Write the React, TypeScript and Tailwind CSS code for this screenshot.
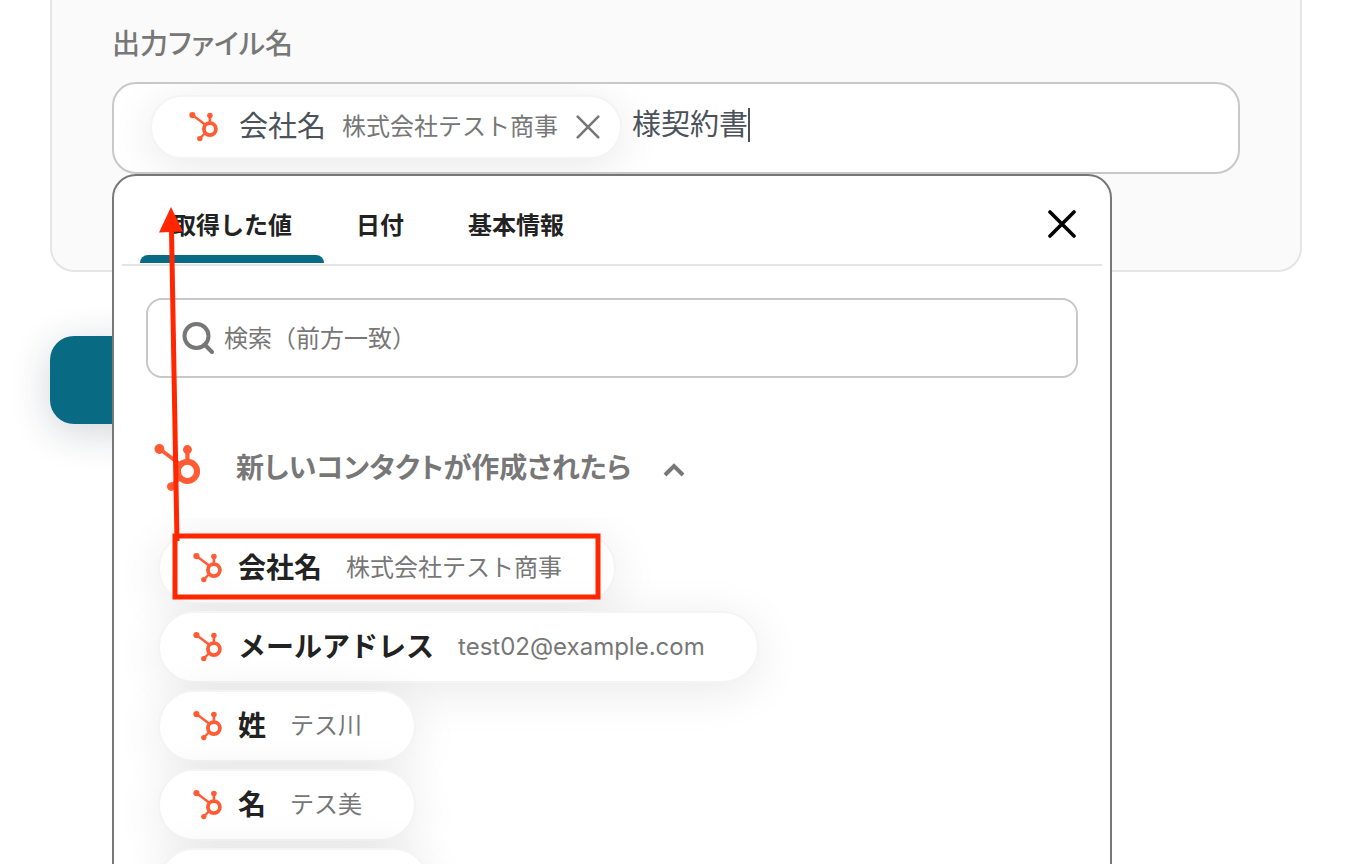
import { useState } from "react";

const TABS = ["取得した値", "日付", "基本情報"] as const;

const FIELDS = [
  { name: "会社名", value: "株式会社テスト商事" },
  { name: "メールアドレス", value: "test02@example.com" },
  { name: "姓", value: "テス川" },
  { name: "名", value: "テス美" },
] as const;

function HubspotLogo({ className }: { className: string }) {
  return (
    <svg viewBox="0 0 30 30" className={className} aria-hidden="true">
      <g stroke="#ff5c35" fill="none">
        <path d="M3.4 3 16 12.5" strokeWidth="2.4" />
        <path d="M20.9 4v8" strokeWidth="2.6" />
        <path d="m10.8 26.4 5.6-5.4" strokeWidth="2.4" />
        <circle cx="20.9" cy="17.1" r="6" strokeWidth="3.8" />
      </g>
      <g fill="#ff5c35">
        <circle cx="3.4" cy="3.1" r="3.1" />
        <circle cx="20.9" cy="3.5" r="2.8" />
        <circle cx="10.8" cy="26.6" r="2.7" />
      </g>
    </svg>
  );
}

function CrossIcon({ className, strokeWidth }: { className: string; strokeWidth: number }) {
  return (
    <svg viewBox="0 0 28 28" className={className} aria-hidden="true">
      <path
        d="M2 2 26 26M26 2 2 26"
        stroke="currentColor"
        strokeWidth={strokeWidth}
        strokeLinecap="round"
      />
    </svg>
  );
}

// Red frame around the first item, with an arrow up to the file name field
function Annotation() {
  return (
    <svg
      viewBox="0 0 500 440"
      className="absolute top-0 left-0 w-[500px] h-[440px] pointer-events-none"
      aria-hidden="true"
    >
      <rect x="61" y="360" width="423" height="61" fill="none" stroke="#ff2600" strokeWidth="5" />
      <path d="M63 365 57.5 54" stroke="#ff2600" strokeWidth="5" />
      <path d="M57 31 45 56.5 69 55.5Z" fill="#ff2600" />
    </svg>
  );
}

export default function App() {
  const [activeTab, setActiveTab] = useState<string>(TABS[0]);
  const [fileName, setFileName] = useState("様契約書");
  const [query, setQuery] = useState("");
  const [open, setOpen] = useState(true);

  return (
    <main className="h-screen overflow-hidden bg-white px-[50px] font-[Inter,'Noto_Sans_CJK_JP',sans-serif] text-[#777]">
      <section className="border-2 border-t-0 border-[#e5e5e5] rounded-b-3xl bg-[#fafafa] px-15 pt-6 pb-24">
        <label
          htmlFor="file-name"
          className="block text-[28px] leading-10 font-medium mb-[18px] [font-feature-settings:'palt']"
        >
          出力ファイル名
        </label>

        <div className="relative">
          {/* File name field */}
          <div className="flex items-center h-[92px] border-2 border-[#c8c8c8] rounded-3xl bg-white pl-9 pb-0.5 overflow-hidden">
            <div className="flex items-center shrink-0 h-16 border-2 border-[#f4f4f4] rounded-full bg-white pl-[37px] pr-5 shadow-[0_8px_48px_rgba(0,0,0,0.09)]">
              <HubspotLogo className="size-[30px]" />
              <span className="ml-5 text-[29px] leading-10 text-[#4b5259]">会社名</span>
              <span className="ml-4 text-2xl">株式会社テスト商事</span>
              <button type="button" className="ml-[18px]" aria-label="削除">
                <CrossIcon className="size-6" strokeWidth={3} />
              </button>
            </div>
            <input
              id="file-name"
              type="text"
              value={fileName}
              onChange={(e) => setFileName(e.target.value)}
              className="ml-2.5 mb-1 field-sizing-content h-10 text-[29px] text-[#4b5259] outline-none"
            />
            <span className="w-0.5 h-[34px] mb-1 bg-[#4b5259]" />
          </div>

          {/* Value picker */}
          <div className="absolute z-10 top-full left-0 w-[1000px] border-2 border-[#777] rounded-t-3xl bg-white">
            <div className="flex items-center mx-2 pl-[18px] pr-[26px] border-b-2 border-[#e5e5e5]">
              <div className="flex flex-1" role="tablist">
                {TABS.map((tab) => (
                  <button
                    key={tab}
                    type="button"
                    role="tab"
                    aria-selected={activeTab === tab}
                    onClick={() => setActiveTab(tab)}
                    className="pt-[34px] pb-px text-2xl leading-8 font-bold text-[#222]"
                  >
                    <span className="block px-8">{tab}</span>
                    <span
                      className={`block mt-[13px] h-2 rounded-t-lg ${
                        activeTab === tab ? "bg-[#086a83]" : "bg-transparent"
                      }`}
                    />
                  </button>
                ))}
              </div>
              <button type="button" className="pt-2 text-black" aria-label="閉じる">
                <CrossIcon className="size-7" strokeWidth={3.6} />
              </button>
            </div>

            <div className="flex items-center gap-2.5 mx-8 mt-8 h-20 border-2 border-[#c8c8c8] rounded-2xl pl-[34px] pr-8">
              <svg viewBox="0 0 32 32" className="size-8 shrink-0" aria-hidden="true">
                <circle cx="14.5" cy="14" r="12" fill="none" stroke="#777" strokeWidth="4" />
                <path d="m22.5 22.5 7.5 7.5" stroke="#777" strokeWidth="4" strokeLinecap="round" />
              </svg>
              <input
                type="text"
                value={query}
                onChange={(e) => setQuery(e.target.value)}
                placeholder="検索（前方一致）"
                aria-label="検索"
                className="flex-1 pt-0.5 text-2xl placeholder:text-[#777] outline-none"
              />
            </div>

            <button
              type="button"
              onClick={() => setOpen((v) => !v)}
              aria-expanded={open}
              className="flex items-center mt-[66px] ml-10 h-12"
            >
              <HubspotLogo className="size-12" />
              <span className="ml-[34px] text-[28px] leading-10 font-bold [font-feature-settings:'palt']">
                新しいコンタクトが作成されたら
              </span>
              <svg viewBox="0 0 22 14" className="ml-8 mt-1 w-[22px] h-[14px]" aria-hidden="true">
                <path d="m2 12 9-9 9 9" fill="none" stroke="#777" strokeWidth="4" />
              </svg>
            </button>

            {open && (
              <ul className="flex flex-col items-start gap-[7px] mt-[26px] pt-[14px] pl-11 pb-10 overflow-hidden">
                {FIELDS.map(({ name, value }) => (
                  <li key={name}>
                    <button
                      type="button"
                      className="flex items-center h-[72px] border-2 border-[#f4f4f4] rounded-full bg-white pl-[33px] pr-13 shadow-[0_8px_48px_rgba(0,0,0,0.09)]"
                    >
                      <HubspotLogo className="size-[30px]" />
                      <span className="ml-[15px] text-[28px] leading-10 font-bold text-[#222]">{name}</span>
                      <span className="ml-6 text-2xl">{value}</span>
                    </button>
                  </li>
                ))}
                <li className="w-[272px] h-[72px] border-2 border-[#f4f4f4] rounded-full bg-white shadow-[0_8px_48px_rgba(0,0,0,0.09)]" />
              </ul>
            )}

            <Annotation />
          </div>
        </div>
      </section>

      <button
        type="button"
        aria-label="保存する"
        className="block mt-16 w-60 h-22 rounded-3xl bg-[#086a83] shadow-[0_8px_40px_rgba(20,40,60,0.2)]"
      />
    </main>
  );
}
